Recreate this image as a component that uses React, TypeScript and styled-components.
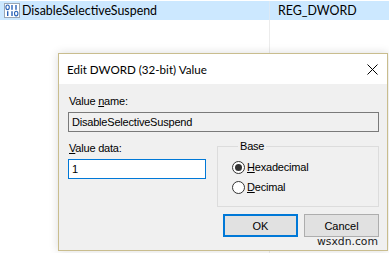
import React from "react";
import styled, { createGlobalStyle } from "styled-components";

const Global = createGlobalStyle`
  html, body { margin: 0; padding: 0; background: #fff; }
  body { width: 389px; height: 253px; overflow: hidden; }
  #root { width: 389px; height: 253px; }
`;

const Page = styled.div`
  position: relative;
  width: 389px;
  height: 253px;
  background: #fff;
  overflow: hidden;
  font-family: "Liberation Sans", Arial, sans-serif;
`;

const ListPane = styled.div`
  display: flex;
  flex-direction: column;
  height: 100%;
  padding-top: 1px;
  box-sizing: border-box;
`;

const ListRow = styled.div<{ $selected?: boolean }>`
  display: grid;
  grid-template-columns: 269px 1fr;
  height: 19px;
  background: ${(p) => (p.$selected ? "#cce8ff" : "transparent")};
`;

const Cell = styled.div<{ $divider?: boolean }>`
  display: flex;
  align-items: center;
  gap: 2px;
  padding-left: ${(p) => (p.$divider ? "8px" : "4px")};
  border-left: ${(p) => (p.$divider ? "1px solid #dce9f5" : "none")};
  font-family: "Lato", "Noto Sans", sans-serif;
  font-size: 12.4px;
  color: #000;
  white-space: nowrap;
`;

const Filler = styled.div`
  flex: 1;
  display: grid;
  grid-template-columns: 269px 1fr;
`;

const FillCol = styled.div<{ $divider?: boolean }>`
  border-left: ${(p) => (p.$divider ? "1px solid #ececec" : "none")};
`;

const Dialog = styled.div`
  position: absolute;
  left: 58px;
  top: 53px;
  width: 330px;
  height: 198px;
  box-sizing: border-box;
  border: 1px solid #c9bd8e;
  background: #f0f0f0;
  box-shadow: 0 0 9px rgba(0, 0, 0, 0.14);
  display: flex;
  flex-direction: column;
`;

const TitleBar = styled.div`
  height: 30px;
  background: #fff;
  display: flex;
  align-items: center;
  justify-content: space-between;
  padding: 0 9px 0 8px;
  flex-shrink: 0;
`;

const Title = styled.span`
  font-family: "Lato", "Noto Sans", sans-serif;
  font-size: 11.6px;
  color: #000;
`;

const CloseIcon = styled.svg`
  width: 11px;
  height: 11px;
  display: block;
`;

const Body = styled.div`
  padding: 11px 8px 0 9px;
  display: flex;
  flex-direction: column;
  font-size: 11px;
  letter-spacing: -0.2px;
  color: #000;
`;

const Label = styled.div`
  height: 13px;
  line-height: 13px;
  margin-left: 1px;
  u { text-decoration: underline; text-underline-offset: 1px; }
`;

const TextBox = styled.div<{ $focused?: boolean; $readonly?: boolean }>`
  box-sizing: border-box;
  height: 20px;
  margin-top: 4px;
  border: 1px solid ${(p) => (p.$focused ? "#0078d7" : "#7a7a7a")};
  background: ${(p) => (p.$readonly ? "#f0f0f0" : "#fff")};
  display: flex;
  align-items: center;
  padding-left: 3px;
  line-height: 13px;
`;

const Row = styled.div`
  display: grid;
  grid-template-columns: 138px 162px;
  column-gap: 11px;
  align-items: start;
  margin-top: 10px;
  height: 61px;
`;

const Column = styled.div`
  display: flex;
  flex-direction: column;
`;

const GroupBox = styled.fieldset`
  margin: -2px 0 0 0;
  padding: 8px 0 0 14px;
  border: 1px solid #dcdcdc;
  height: 67px;
  box-sizing: border-box;
  min-width: 0;
`;

const Legend = styled.legend`
  padding: 0 2px;
  margin-left: 6px;
  font-size: 11px;
  line-height: 13px;
`;

const RadioList = styled.div`
  display: flex;
  flex-direction: column;
  gap: 7px;
`;

const RadioRow = styled.div`
  display: flex;
  align-items: center;
  gap: 2px;
  height: 13px;
  line-height: 13px;
  u { text-decoration: underline; text-underline-offset: 1px; }
`;

const RadioCircle = styled.span<{ $checked?: boolean }>`
  box-sizing: border-box;
  width: 13px;
  height: 13px;
  border-radius: 50%;
  border: 1px solid #333;
  background: #fff;
  display: flex;
  align-items: center;
  justify-content: center;
  &::after {
    content: "";
    width: 7px;
    height: 7px;
    border-radius: 50%;
    background: ${(p) => (p.$checked ? "#333" : "transparent")};
  }
`;

const ButtonRow = styled.div`
  display: flex;
  justify-content: flex-end;
  gap: 6px;
  margin-top: 11px;
`;

const Button = styled.div<{ $default?: boolean }>`
  box-sizing: border-box;
  width: 75px;
  height: 23px;
  background: #e1e1e1;
  border: ${(p) => (p.$default ? "2px solid #0078d7" : "1px solid #adadad")};
  display: flex;
  align-items: center;
  justify-content: center;
  font-size: 11px;
  letter-spacing: 0;
  color: #000;
`;

const Watermark = styled.div`
  position: absolute;
  right: 11px;
  top: 235px;
  font-family: "DejaVu Sans", sans-serif;
  font-size: 10.8px;
  color: #1a1a1a;
`;

const DwordIcon = () => (
  <svg width="16" height="15" viewBox="0 0 16 15">
    <rect x="0.5" y="0.5" width="15" height="14" fill="#fff" stroke="#9aa6b4" />
    <ellipse cx="3.6" cy="4.3" rx="1.7" ry="2.3" fill="none" stroke="#2a63b8" strokeWidth="1.1" />
    <rect x="7.3" y="2" width="1.4" height="4.8" fill="#2a63b8" />
    <rect x="11.3" y="2" width="1.4" height="4.8" fill="#2a63b8" />
    <rect x="3" y="8.2" width="1.4" height="4.8" fill="#2a63b8" />
    <rect x="7.3" y="8.2" width="1.4" height="4.8" fill="#2a63b8" />
    <ellipse cx="12.2" cy="10.6" rx="1.7" ry="2.3" fill="none" stroke="#2a63b8" strokeWidth="1.1" />
  </svg>
);

export default function App() {
  return (
    <Page>
      <Global />
      <ListPane>
        <ListRow $selected>
          <Cell>
            <DwordIcon />
            DisableSelectiveSuspend
          </Cell>
          <Cell $divider>REG_DWORD</Cell>
        </ListRow>
        <Filler>
          <FillCol />
          <FillCol $divider />
        </Filler>
      </ListPane>

      <Dialog>
        <TitleBar>
          <Title>Edit DWORD (32-bit) Value</Title>
          <CloseIcon viewBox="0 0 11 11">
            <path d="M0.5 0.5 L10.5 10.5 M10.5 0.5 L0.5 10.5" stroke="#000" strokeWidth="1" />
          </CloseIcon>
        </TitleBar>
        <Body>
          <Label>
            Value <u>n</u>ame:
          </Label>
          <TextBox $readonly>DisableSelectiveSuspend</TextBox>
          <Row>
            <Column>
              <Label>
                <u>V</u>alue data:
              </Label>
              <TextBox $focused>1</TextBox>
            </Column>
            <GroupBox>
              <Legend>Base</Legend>
              <RadioList>
                <RadioRow>
                  <RadioCircle $checked />
                  <span>
                    <u>H</u>exadecimal
                  </span>
                </RadioRow>
                <RadioRow>
                  <RadioCircle />
                  <span>
                    <u>D</u>ecimal
                  </span>
                </RadioRow>
              </RadioList>
            </GroupBox>
          </Row>
          <ButtonRow>
            <Button $default>OK</Button>
            <Button>Cancel</Button>
          </ButtonRow>
        </Body>
      </Dialog>
      <Watermark>wsxdn.com</Watermark>
    </Page>
  );
}
